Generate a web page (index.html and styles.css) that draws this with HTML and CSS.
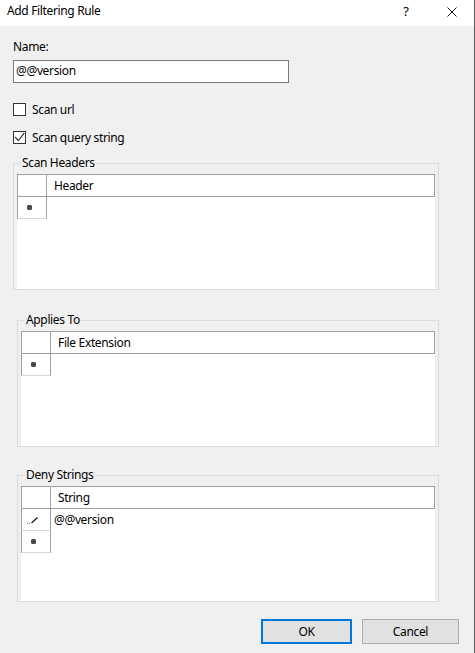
FILE: index.html
```html
<!DOCTYPE html>
<html lang="en">
<head>
<meta charset="utf-8">
<title>Add Filtering Rule</title>
<link rel="stylesheet" href="styles.css">
</head>
<body>
<div class="window">
  <div class="titlebar">
    <span class="title">Add Filtering Rule</span>
    <span class="help">?</span>
    <span class="close">
      <svg width="10" height="10" viewBox="0 0 10 10"><path d="M0.5 0.5L9.5 9.5M9.5 0.5L0.5 9.5" stroke="#111" stroke-width="1" fill="none"/></svg>
    </span>
  </div>
  <div class="content">
    <div class="field-label">Name:</div>
    <div class="textbox">@@version</div>
    <label class="check first"><span class="box"></span><span>Scan url</span></label>
    <label class="check second"><span class="box"><svg width="11" height="11" viewBox="0 0 11 11"><path d="M1 5.2L4.3 8.5L10.2 1.2" stroke="#222" stroke-width="1.1" fill="none"/></svg></span><span>Scan query string</span></label>

    <fieldset class="group g1">
      <legend>Scan Headers</legend>
      <div class="grid">
        <div class="row head"><div class="rh"></div><div class="cell">Header</div></div>
        <div class="row"><div class="rh"><svg class="star" width="5" height="5" viewBox="0 0 5 5"><path d="M1 0h3l1 1v3l-1 1h-3l-1-1v-3z" fill="#4a4a4a"/></svg></div><div class="cell"></div></div>
      </div>
    </fieldset>

    <fieldset class="group g2">
      <legend>Applies To</legend>
      <div class="grid">
        <div class="row head"><div class="rh"></div><div class="cell">File Extension</div></div>
        <div class="row"><div class="rh"><svg class="star" width="5" height="5" viewBox="0 0 5 5"><path d="M1 0h3l1 1v3l-1 1h-3l-1-1v-3z" fill="#4a4a4a"/></svg></div><div class="cell"></div></div>
      </div>
    </fieldset>

    <fieldset class="group g3">
      <legend>Deny Strings</legend>
      <div class="grid">
        <div class="row head"><div class="rh"></div><div class="cell">String</div></div>
        <div class="row"><div class="rh edit"><svg width="12" height="8" viewBox="0 0 12 8"><path d="M0 7.5h1M2 7.5h1" stroke="#888" stroke-width="1" fill="none"/><path d="M4.5 7L10.5 1.5" stroke="#222" stroke-width="1.5" fill="none"/></svg></div><div class="cell">@@version</div></div>
        <div class="row"><div class="rh"><svg class="star" width="5" height="5" viewBox="0 0 5 5"><path d="M1 0h3l1 1v3l-1 1h-3l-1-1v-3z" fill="#4a4a4a"/></svg></div><div class="cell"></div></div>
      </div>
    </fieldset>

    <div class="buttons">
      <button class="btn ok">OK</button>
      <button class="btn cancel">Cancel</button>
    </div>
  </div>
</div>
</body>
</html>
```

FILE: styles.css
```css
* { box-sizing: border-box; }
html, body { margin: 0; padding: 0; }
body {
  width: 475px;
  height: 653px;
  overflow: hidden;
  background: #f0f0f0;
  font-family: "Noto Sans", "Segoe UI", sans-serif;
  font-size: 12px;
  letter-spacing: -0.35px;
  color: #000;
}
.window {
  width: 475px;
  height: 653px;
  background: #f0f0f0;
  border-right: 1px solid #5a5a5a;
}
.titlebar {
  height: 26px;
  background: #fff;
  display: flex;
  align-items: flex-start;
}
.title {
  flex: 1;
  padding: 3px 0 0 7px;
  line-height: 16px;
}
.help {
  width: 46px;
  text-align: center;
  padding-top: 3px;
  line-height: 16px;
  font-size: 13px;
}
.close {
  width: 45px;
  display: flex;
  justify-content: center;
  padding-top: 7px;
}
.content {
  padding: 13px 15px 0 13px;
}
.field-label { line-height: 16px; }
.textbox {
  margin-top: 5px;
  width: 276px;
  height: 23px;
  border: 1px solid #7a7a7a;
  background: #fff;
  padding-left: 2px;
  line-height: 19px;
}
.check {
  display: flex;
  align-items: center;
  height: 13px;
  line-height: 11px;
}
.check.first { margin-top: 20px; }
.check.second { margin-top: 15px; }
.box {
  width: 13px;
  height: 13px;
  flex: none;
  border: 1px solid #333;
  background: #fff;
  margin-right: 6px;
  display: flex;
}
.group {
  margin: 11px 0 0 0;
  padding: 3px 3px 0 3px;
  border: 1px solid #dcdcdc;
  width: 426px;
  min-width: 0;
}
.group.g2 { margin: 22px 0 0 4px; width: 422px; }
.group.g3 { margin: 20px 0 0 4px; width: 422px; }
legend {
  margin-left: 4px;
  padding: 0 1px;
  line-height: 16px;
}
.grid {
  background: #fff;
  height: 115px;
}
.row {
  display: flex;
  height: 22px;
}
.row.head {
  height: 23px;
  border-top: 1px solid #a0a0a0;
  border-bottom: 1px solid #a0a0a0;
}
.rh {
  width: 30px;
  flex: none;
  border-left: 1px solid #a0a0a0;
  border-right: 1px solid #a0a0a0;
  border-bottom: 1px solid #d6d6d6;
  display: flex;
  align-items: center;
  padding-left: 9px;
}
.head .rh { border-bottom: none; }
.rh.edit { padding-left: 5px; }
.cell {
  flex: 1;
  padding-left: 3px;
  line-height: 21px;
  white-space: nowrap;
}
.head .cell {
  padding-left: 7px;
  border-right: 1px solid #a0a0a0;
}
.buttons {
  display: flex;
  justify-content: flex-end;
  gap: 10px;
  margin-top: 17px;
}
.btn {
  height: 25px;
  padding: 0;
  background: #e1e1e1;
  border: 1px solid #adadad;
  font-family: inherit;
  font-size: 12px;
  letter-spacing: inherit;
  color: #000;
  line-height: 21px;
}
.btn.ok { width: 91px; border: 2px solid #0078d7; }
.btn.cancel { width: 97px; }
```
